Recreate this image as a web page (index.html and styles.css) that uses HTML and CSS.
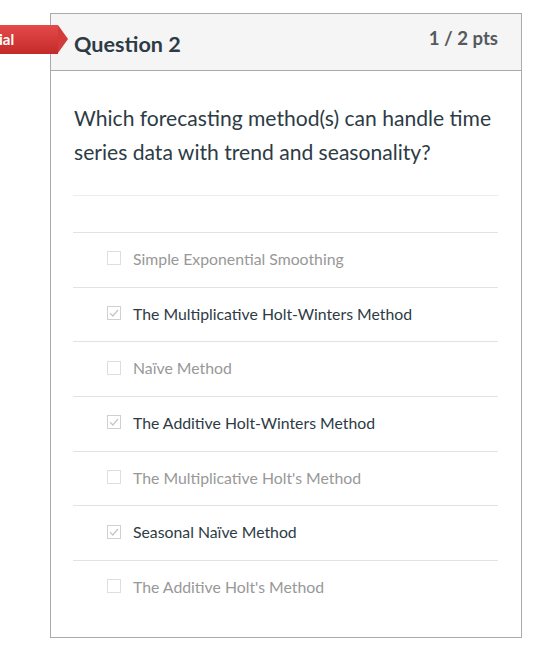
FILE: index.html
```html
<!DOCTYPE html>
<html>
<head>
<meta charset="utf-8">
<link rel="stylesheet" href="styles.css">
</head>
<body>
<div class="page">
  <div class="badge"><span>ial</span></div>
  <div class="card">
    <div class="card-header">
      <div class="title">Question 2</div>
      <div class="pts">1 / 2 pts</div>
    </div>
    <div class="card-body">
      <div class="question">Which forecasting method(s) can handle time series data with trend and seasonality?</div>
      <div class="spacer"></div>
      <div class="answers">
        <div class="answer"><span class="box"></span><span class="label">Simple Exponential Smoothing</span></div>
        <div class="answer checked"><span class="box"><svg viewBox="0 0 14 14" width="14" height="14"><path d="M3 7.2 L5.8 10 L11 4" fill="none" stroke="#c4c4c4" stroke-width="1.2"/></svg></span><span class="label">The Multiplicative Holt-Winters Method</span></div>
        <div class="answer"><span class="box"></span><span class="label">Naïve Method</span></div>
        <div class="answer checked"><span class="box"><svg viewBox="0 0 14 14" width="14" height="14"><path d="M3 7.2 L5.8 10 L11 4" fill="none" stroke="#c4c4c4" stroke-width="1.2"/></svg></span><span class="label">The Additive Holt-Winters Method</span></div>
        <div class="answer"><span class="box"></span><span class="label">The Multiplicative Holt's Method</span></div>
        <div class="answer checked"><span class="box"><svg viewBox="0 0 14 14" width="14" height="14"><path d="M3 7.2 L5.8 10 L11 4" fill="none" stroke="#c4c4c4" stroke-width="1.2"/></svg></span><span class="label">Seasonal Naïve Method</span></div>
        <div class="answer"><span class="box"></span><span class="label">The Additive Holt's Method</span></div>
      </div>
    </div>
  </div>
</div>
</body>
</html>
```
FILE: styles.css
```css
html, body {
  margin: 0;
  padding: 0;
  background: #fff;
}
body {
  font-family: Lato, "Noto Sans", sans-serif;
  color: #2d3b45;
}
.page {
  position: relative;
  padding: 13px 0 0 50px;
}
.badge {
  position: absolute;
  left: 0;
  top: 25px;
  width: 58px;
  height: 29px;
  background: linear-gradient(#e54a4a, #c42a2a);
  color: #fff;
  font-weight: bold;
  font-size: 15px;
  line-height: 29px;
  z-index: 2;
}
.badge span {
  display: block;
  margin-left: -1px;
}
.badge::after {
  content: "";
  position: absolute;
  right: -10px;
  top: 0;
  border-left: 10px solid #d33a3a;
  border-top: 14.5px solid transparent;
  border-bottom: 14.5px solid transparent;
}
.card {
  width: 470px;
  height: 623px;
  border: 1px solid #aaaaaa;
  box-sizing: content-box;
}
.card-header {
  height: 56px;
  background: #f5f5f5;
  border-bottom: 1px solid #aaaaaa;
  display: flex;
  justify-content: space-between;
  padding: 0 23px 0 23px;
}
.title {
  font-size: 21.6px;
  font-weight: bold;
  line-height: 22px;
  padding-top: 19px;
  color: #2d3b45;
}
.pts {
  font-size: 18.6px;
  font-weight: bold;
  color: #555a5e;
  padding-top: 13px;
  line-height: 22px;
}
.card-body {
  padding: 0 23px 0 22px;
}
.question {
  font-size: 21.1px;
  line-height: 34px;
  padding: 30px 0 0 1px;
  height: 94px;
  border-bottom: 1px solid #ececec;
  box-sizing: content-box;
}
.spacer {
  height: 36px;
}
.answer {
  border-top: 1px solid #e2e2e2;
  display: flex;
  align-items: center;
  padding-left: 34px;
  padding-bottom: 3px;
  box-sizing: content-box;
  height: 50.7px;
  font-size: 15.8px;
  color: #989898;
}
.answer.checked {
  color: #2d3b45;
}
.box {
  width: 12px;
  height: 12px;
  border: 1px solid #dedede;
  margin-right: 12px;
  position: relative;
  flex: none;
}
.answer.checked .box {
  border-color: #d0d0d0;
}
.box svg {
  position: absolute;
  left: -1px;
  top: -1px;
}
```
